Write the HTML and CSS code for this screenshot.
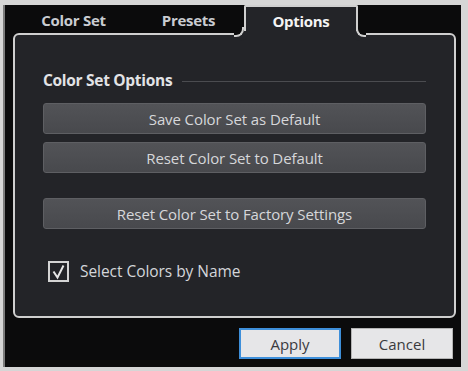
FILE: index.html
```html
<!DOCTYPE html>
<html lang="en">
<head>
<meta charset="UTF-8">
<meta name="viewport" content="width=device-width, initial-scale=1.0">
<title>Color Set Options</title>
<link rel="stylesheet" href="styles.css">
</head>
<body>
	<div class="window">
		<div class="tabbar">
			<div class="tab">Color Set</div>
			<div class="tab">Presets</div>
			<div class="tab active">Options</div>
		</div>
		<div class="panel">
			<div class="group-title">
				<span>Color Set Options</span>
				<div class="rule"></div>
			</div>
			<button class="btn">Save Color Set as Default</button>
			<button class="btn">Reset Color Set to Default</button>
			<button class="btn btn-spaced">Reset Color Set to Factory Settings</button>
			<label class="check">
				<svg class="check-box" width="21" height="21" viewBox="0 0 21 21">
					<rect x="1" y="1" width="19" height="19" fill="none" stroke="#d4d4d4" stroke-width="2"/>
					<path d="M5.5 10.5 L9.5 16.5 L15.5 4.5" fill="none" stroke="#e6e6e6" stroke-width="2"/>
				</svg>
				<span>Select Colors by Name</span>
			</label>
		</div>
		<div class="footer">
			<button class="dlg-btn default">Apply</button>
			<button class="dlg-btn">Cancel</button>
		</div>
	</div>
</body>
</html>
```

FILE: styles.css
```css
html, body {
	margin: 0;
	padding: 0;
}

body {
	width: 468px;
	height: 371px;
	background-color: #d6d6d6;
	font-family: "Open Sans", "Liberation Sans", sans-serif;
	overflow: hidden;
}

.window {
	margin: 5px 0 0 3px;
	width: 456px;
	height: 362px;
	background-color: #0b0b0c;
	border-left: 2px solid #7c7c7c;
	display: flex;
	flex-direction: column;
}

.tabbar {
	height: 28px;
	display: flex;
	align-items: flex-start;
	padding-left: 11px;
}

.tab {
	width: 115px;
	height: 28px;
	line-height: 31px;
	text-align: center;
	font-size: 15px;
	font-weight: 700;
	color: #c9ccd1;
	letter-spacing: -0.3px;
	white-space: nowrap;
}

.tab.active {
	position: relative;
	z-index: 1;
	width: 110px;
	height: 30px;
	margin-left: -2px;
	margin-bottom: -2px;
	background-color: #232428;
	border: 2px solid #cfcfcf;
	border-bottom: none;
	border-radius: 2px 2px 0 0;
	color: #f4f4f4;
	line-height: 28px;
}

/* inverted corners where the tab meets the panel edge */
.tab.active::before,
.tab.active::after {
	content: "";
	position: absolute;
	bottom: 0;
	width: 8px;
	height: 8px;
	background-color: #0b0b0c;
	border-bottom: 2px solid #cfcfcf;
}

.tab.active::before {
	left: -12px;
	border-right: 2px solid #cfcfcf;
	border-bottom-right-radius: 8px;
	box-shadow: 4px 4px 0 0 #232428;
}

.tab.active::after {
	left: 110px;
	border-left: 2px solid #cfcfcf;
	border-bottom-left-radius: 8px;
	box-shadow: -4px 4px 0 0 #232428;
}

.panel {
	margin: 0 5px 0 8px;
	height: 285px;
	box-sizing: border-box;
	background-color: #232428;
	border: 2px solid #cfcfcf;
	border-radius: 6px;
	padding: 35px 28px 0 28px;
	display: flex;
	flex-direction: column;
}

.group-title {
	display: flex;
	align-items: center;
	height: 20px;
	font-size: 15.5px;
	font-weight: 700;
	color: #e2e3e6;
	letter-spacing: -0.3px;
	margin-bottom: 13px;
	white-space: nowrap;
}

.rule {
	flex: 1;
	height: 1px;
	margin: 2px 0 0 10px;
	background-color: #4b4c50;
}

.btn {
	height: 31px;
	margin: 0 0 8px 0;
	padding: 0;
	background: linear-gradient(#525357, #48494d);
	border: 1px solid #5e5f63;
	border-radius: 3px;
	color: #d6d7da;
	font-family: "Open Sans", "Liberation Sans", sans-serif;
	font-size: 15px;
	letter-spacing: -0.1px;
}

.btn-spaced {
	margin-top: 17px;
}

.check {
	display: flex;
	align-items: center;
	margin: 23px 0 0 5px;
	color: #d4d6da;
	font-size: 15.5px;
	letter-spacing: -0.05px;
}

.check-box {
	margin-right: 11px;
}

.footer {
	flex: 1;
	display: flex;
	justify-content: flex-end;
	align-items: flex-start;
	gap: 10px;
	padding: 10px 8px 0 0;
}

.dlg-btn {
	width: 102px;
	height: 31px;
	box-sizing: border-box;
	background-color: #e6e6e8;
	border: 1px solid #b4b4b4;
	color: #3a3a3e;
	font-family: "Open Sans", "Liberation Sans", sans-serif;
	font-size: 15px;
	padding: 0;
}

.dlg-btn.default {
	border: 2px solid #3e8fda;
}
```
